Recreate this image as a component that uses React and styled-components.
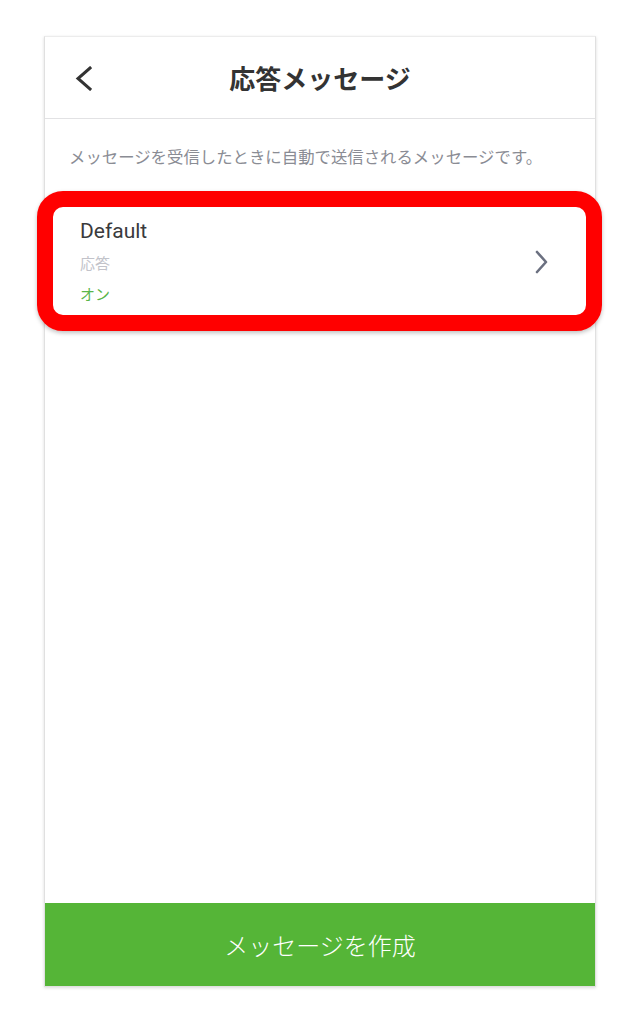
import React from "react"
import styled, { createGlobalStyle } from "styled-components"

const GlobalStyle = createGlobalStyle`
  html, body {
    margin: 0;
    padding: 0;
    background: #ffffff;
  }
  body {
    font-family: Roboto, "Noto Sans CJK JP", sans-serif;
  }
`

const BackIcon = () => (
  <svg width="17" height="25" viewBox="0 0 17 25" fill="none">
    <polyline points="15,2 3,12.5 15,23" stroke="#333" strokeWidth="3" strokeLinecap="square" />
  </svg>
)

const ChevronIcon = () => (
  <svg width="13" height="24" viewBox="0 0 13 24" fill="none">
    <polyline points="2,2 11,12 2,22" stroke="#6b7080" strokeWidth="2.6" strokeLinecap="round" strokeLinejoin="round" />
  </svg>
)

export default function App() {
  return (
    <Page>
      <GlobalStyle />
      <Phone>
        <Header>
          <BackButton>
            <BackIcon />
          </BackButton>
          <Title>応答メッセージ</Title>
          <span />
        </Header>

        <Description>メッセージを受信したときに自動で送信されるメッセージです。</Description>

        <Item>
          <ItemText>
            <ItemName>Default</ItemName>
            <ItemType>応答</ItemType>
            <ItemStatus>オン</ItemStatus>
          </ItemText>
          <ChevronIcon />
          <Highlight />
        </Item>

        <CreateButton>メッセージを作成</CreateButton>
      </Phone>
    </Page>
  )
}

const Page = styled.div`
  padding: 36px 44px;
  width: 640px;
  box-sizing: border-box;
`

const Phone = styled.div`
  display: flex;
  flex-direction: column;
  height: 951px;
  box-sizing: border-box;
  border: 1px solid #e0e0e0;
  border-top-color: #ececec;
  box-shadow: 0 1px 3px rgba(0, 0, 0, 0.14);
  background: #fff;
`

const Header = styled.div`
  display: grid;
  grid-template-columns: 1fr auto 1fr;
  align-items: center;
  height: 81px;
  border-bottom: 1px solid #e2e2e4;
  flex-shrink: 0;
`

const BackButton = styled.div`
  display: flex;
  align-items: center;
  padding-left: 30px;
  padding-top: 1px;
`

const Title = styled.h1`
  margin: 0;
  font-size: 26px;
  font-weight: 700;
  color: #333;
  line-height: 30px;
  font-family: "Noto Sans CJK JP", sans-serif;
`

const Description = styled.p`
  margin: 25px 0 0;
  padding-left: 24px;
  font-size: 16.4px;
  line-height: 24px;
  color: #8a8c94;
  font-family: "Noto Sans CJK JP", sans-serif;
`

const Item = styled.div`
  position: relative;
  display: flex;
  align-items: center;
  justify-content: space-between;
  margin: 40px 9px 0 8px;
  padding: 11px 38px 11px 27px;
`

const ItemText = styled.div`
  display: flex;
  flex-direction: column;
`

const ItemName = styled.div`
  font-size: 21px;
  line-height: 24px;
  color: #3a3a3c;
`

const ItemType = styled.div`
  margin-top: 10px;
  font-size: 15px;
  line-height: 20px;
  color: #c2c3ca;
  font-family: "Noto Sans CJK JP", sans-serif;
`

const ItemStatus = styled.div`
  margin-top: 11px;
  font-size: 15px;
  line-height: 20px;
  color: #5ab54a;
  font-family: "Noto Sans CJK JP", sans-serif;
`

const Highlight = styled.div`
  position: absolute;
  top: -17px;
  left: -16px;
  right: -16px;
  bottom: -16px;
  border: 16px solid #ff0000;
  border-radius: 26px;
  box-shadow: 0 2px 4px rgba(0, 0, 0, 0.25);
  pointer-events: none;
`

const CreateButton = styled.div`
  margin-top: auto;
  height: 83px;
  display: flex;
  align-items: center;
  justify-content: center;
  background: #55b537;
  color: #fff;
  font-size: 24px;
  font-family: "Noto Sans CJK JP", sans-serif;
  font-weight: 300;
  letter-spacing: 0;
`
